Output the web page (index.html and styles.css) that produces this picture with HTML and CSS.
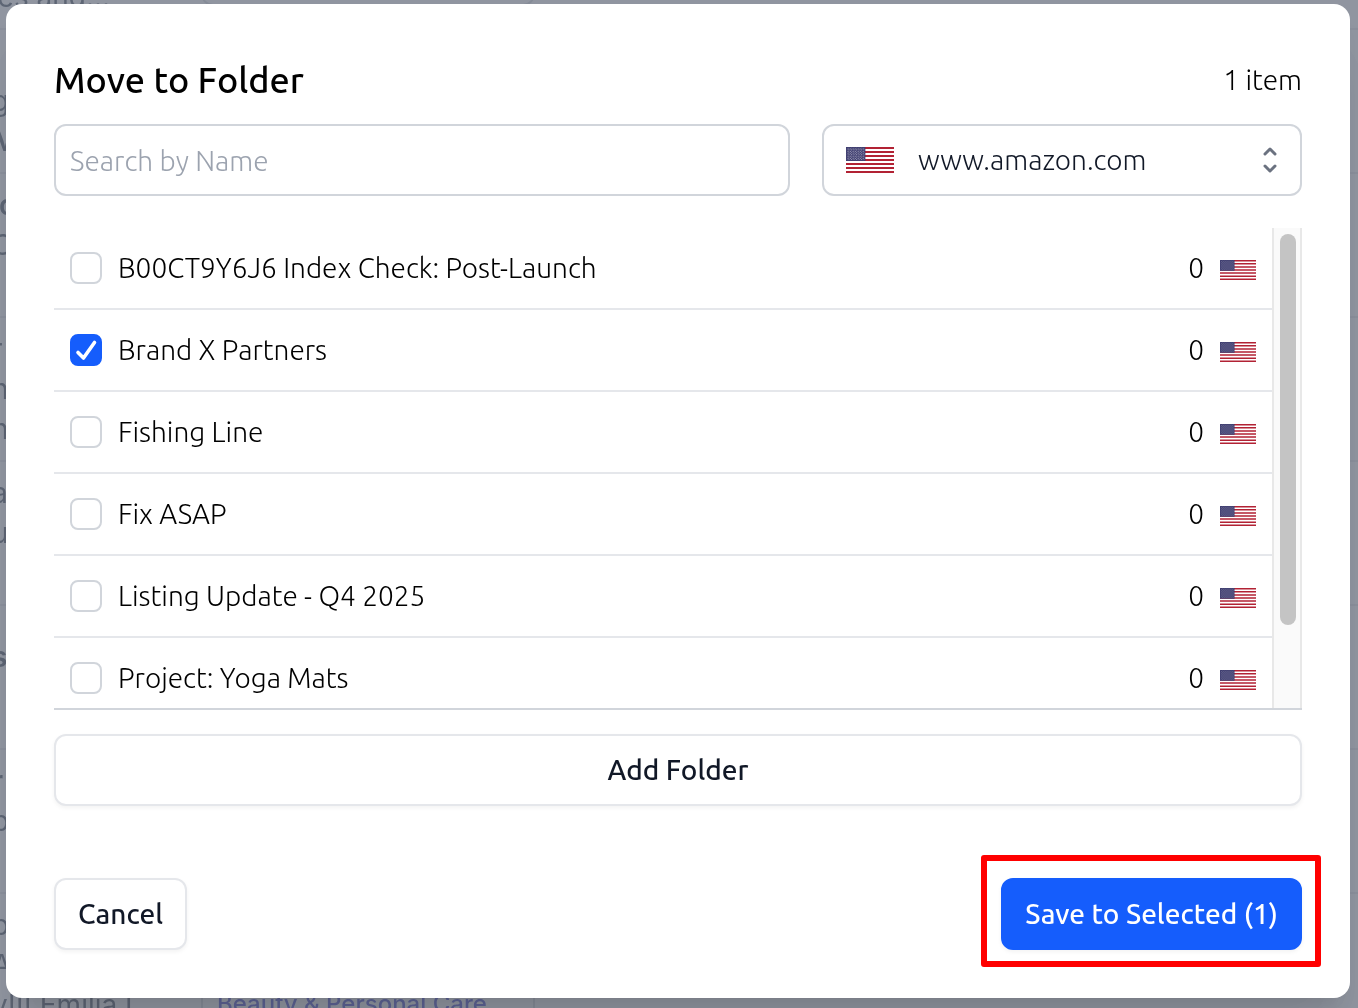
FILE: index.html
```html
<!DOCTYPE html>
<html lang="en">
<head>
<meta charset="utf-8">
<meta name="viewport" content="width=device-width, initial-scale=1">
<title>Move to Folder</title>
<link rel="stylesheet" href="styles.css">
</head>
<body>
<svg class="sprite" aria-hidden="true">
  <defs>
    <pattern id="stars" width="6" height="6" patternUnits="userSpaceOnUse">
      <circle cx="1.5" cy="1.5" r="1" fill="#fff"/>
      <circle cx="4.5" cy="4.5" r="1" fill="#fff"/>
    </pattern>
    <symbol id="flag-us" viewBox="0 0 114 65" preserveAspectRatio="none">
      <path fill="#fff" d="M0 0h114v65H0z"/>
      <path stroke="#b22234" stroke-width="5" d="M0 2.5h114M0 12.5h114M0 22.5h114M0 32.5h114M0 42.5h114M0 52.5h114M0 62.5h114"/>
      <path fill="#3c3b6e" d="M0 0h46v35H0z"/>
      <path fill="url(#stars)" d="M2 2h42v31H2z"/>
    </symbol>
  </defs>
</svg>

<div class="page" aria-hidden="true">
  <div class="record"><div class="record-text"><span></span><span></span><span class="run-in">lies and...</span></div><div class="tag"></div></div>
  <div class="record"><div class="record-text"><span></span><span>g</span><span class="strong">M</span></div></div>
  <div class="record"><div class="record-text"><span class="strong">&nbsp;c</span><span>C</span><span></span></div></div>
  <div class="record"><div class="record-text"><span>r</span><span>n</span><span>h</span></div></div>
  <div class="record"><div class="record-text"><span>a</span><span>u</span><span></span></div></div>
  <div class="record"><div class="record-text"><span class="strong">s</span><span>.</span></div></div>
  <div class="record"><div class="record-text"><span class="strong">r</span><span>p</span><span></span></div></div>
  <div class="record"><div class="record-text"><span>b</span><span>A</span><span>y!!! Emilia L</span></div><div class="tag">Beauty &amp; Personal Care</div></div>
</div>

<div class="overlay">
  <form class="modal" role="dialog" aria-labelledby="dialog-title">
    <header class="modal-header">
      <h1 id="dialog-title">Move to Folder</h1>
      <span>1 item</span>
    </header>

    <div class="filters">
      <input class="field" type="text" placeholder="Search by Name" aria-label="Search by Name">
      <div class="market">
        <svg class="market-flag" aria-hidden="true"><use href="#flag-us"/></svg>
        <select class="field market-select" aria-label="Marketplace"><option>www.amazon.com</option></select>
        <svg class="market-arrows" viewBox="0 0 16 28" aria-hidden="true"><path d="m3 8 5-5 5 5M3 20l5 5 5-5"/></svg>
      </div>
    </div>

    <div class="folders">
      <ul class="folder-list">
        <li class="folder"><input type="checkbox" id="f1"><label for="f1">B00CT9Y6J6 Index Check: Post-Launch</label><span>0</span><svg class="flag" aria-hidden="true"><use href="#flag-us"/></svg></li>
        <li class="folder"><input type="checkbox" id="f2" checked><label for="f2">Brand X Partners</label><span>0</span><svg class="flag" aria-hidden="true"><use href="#flag-us"/></svg></li>
        <li class="folder"><input type="checkbox" id="f3"><label for="f3">Fishing Line</label><span>0</span><svg class="flag" aria-hidden="true"><use href="#flag-us"/></svg></li>
        <li class="folder"><input type="checkbox" id="f4"><label for="f4">Fix ASAP</label><span>0</span><svg class="flag" aria-hidden="true"><use href="#flag-us"/></svg></li>
        <li class="folder"><input type="checkbox" id="f5"><label for="f5">Listing Update - Q4 2025</label><span>0</span><svg class="flag" aria-hidden="true"><use href="#flag-us"/></svg></li>
        <li class="folder"><input type="checkbox" id="f6"><label for="f6">Project: Yoga Mats</label><span>0</span><svg class="flag" aria-hidden="true"><use href="#flag-us"/></svg></li>
      </ul>
      <div class="scroll-track"><div class="scroll-thumb"></div></div>
    </div>

    <button class="button" type="button">Add Folder</button>

    <footer class="modal-footer">
      <button class="button" type="button">Cancel</button>
      <div class="callout"><button class="button primary" type="submit">Save to Selected (1)</button></div>
    </footer>
  </form>
</div>
</body>
</html>
```
FILE: styles.css
```css
* { box-sizing: border-box; }

body {
  margin: 0;
  color: #000;
  background: #fff;
  font: 300 28px/40px Ubuntu, "Open Sans", "Noto Sans", sans-serif;
}

.sprite { position: absolute; width: 0; height: 0; }

/* Product table behind the dialog */
.page {
  position: fixed;
  inset: 0;
  overflow: hidden;
  color: #374151;
  font: 400 28px/40px Inter, sans-serif;
}
.record {
  display: flex;
  align-items: center;
  height: 144px;
  border-bottom: 2px solid #e5e7eb;
}
.record:first-child { margin-top: -114px; }
.record-text {
  display: flex;
  flex-direction: column;
  flex: 0 0 209px;
  margin-left: -8px;
  white-space: nowrap;
}
.record-text span { height: 40px; }
.run-in { margin-left: -8px; }
.strong { font-weight: 600; }
.tag {
  align-self: flex-end;
  width: 334px;
  height: 68px;
  margin-bottom: 22px;
  padding: 0 14px;
  border: 2px solid #d1d5db;
  border-radius: 12px;
  color: #3538cd;
  font-size: 24px;
  font-weight: 500;
}
.record:last-child .tag { margin-bottom: 0; padding-top: 14px; }

.overlay {
  position: relative;
  min-height: 100vh;
  padding: 4px 8px 10px 6px;
  background: rgba(107, 114, 128, .75);
}
.modal {
  display: flex;
  flex-direction: column;
  padding: 48px;
  border-radius: 16px;
  background: #fff;
  box-shadow: 0 40px 50px -10px rgba(0, 0, 0, .1), 0 16px 20px -12px rgba(0, 0, 0, .1);
}
.modal-header {
  display: flex;
  align-items: center;
  justify-content: space-between;
  height: 56px;
  margin-bottom: 16px;
}
h1 { margin: 0; font-size: 36px; font-weight: 500; }

.filters {
  display: grid;
  grid-template-columns: 1fr 480px;
  gap: 32px;
  margin-bottom: 32px;
}
.field {
  width: 100%;
  height: 72px;
  padding: 0 14px;
  border: 2px solid #d1d5db;
  border-radius: 12px;
  background: #fff;
  color: #111827;
  font: inherit;
}
.field::placeholder { color: #9ca3af; opacity: 1; }
.market { position: relative; }
.market-select { appearance: none; padding: 0 64px 0 94px; }
.market-flag, .market-arrows { position: absolute; pointer-events: none; }
.market-flag { top: 23px; left: 24px; width: 48px; height: 26px; }
.market-arrows {
  top: 22px;
  right: 24px;
  width: 16px;
  height: 28px;
  fill: none;
  stroke: #6b7280;
  stroke-width: 3;
  stroke-linecap: round;
  stroke-linejoin: round;
}

.folders {
  display: flex;
  height: 482px;
  margin-bottom: 24px;
  border-bottom: 2px solid #d1d5db;
}
.folder-list {
  flex: 1;
  margin: 0;
  padding: 0;
  overflow: hidden;
  list-style: none;
}
.folder {
  display: flex;
  align-items: center;
  gap: 16px;
  height: 82px;
  padding: 0 16px;
  border-bottom: 2px solid #e5e7eb;
}
.folder label { flex: 1; }
.folder input {
  appearance: none;
  width: 32px;
  height: 32px;
  margin: 0;
  border: 2px solid #d1d5db;
  border-radius: 8px;
  background: #fff;
}
.folder input:checked {
  border-color: #155dfc;
  background: #155dfc url("data:image/svg+xml,%3Csvg xmlns='http://www.w3.org/2000/svg' viewBox='0 0 32 32'%3E%3Cpath d='M8 18.500l5.500 5.500L24.500 8.500' fill='none' stroke='%23fff' stroke-width='3.600' stroke-linecap='round' stroke-linejoin='round'/%3E%3C/svg%3E") center / 32px 32px no-repeat;
}
.flag { width: 36px; height: 20px; margin-top: 4px; }

.scroll-track {
  width: 30px;
  padding: 6px;
  border: solid #e8e8e8;
  border-width: 0 2px;
  background: #fafafa;
}
.scroll-thumb {
  width: 16px;
  height: 391px;
  border-radius: 8px;
  background: #c4c4c4;
}

.button {
  height: 72px;
  padding: 0 22px;
  border: 2px solid #e5e7eb;
  border-radius: 12px;
  background: #fff;
  color: #111827;
  font: inherit;
  font-weight: 500;
  box-shadow: 0 2px 4px rgba(0, 0, 0, .05);
}
.primary { border-color: #155dfc; background: #155dfc; color: #fff; }

.modal-footer {
  display: flex;
  justify-content: space-between;
  margin-top: 72px;
}
.callout { position: relative; }
.callout::after {
  content: "";
  position: absolute;
  inset: -23px -19px -17px -20px;
  border: 6px solid #f00;
  border-radius: 3px;
  pointer-events: none;
}
```
